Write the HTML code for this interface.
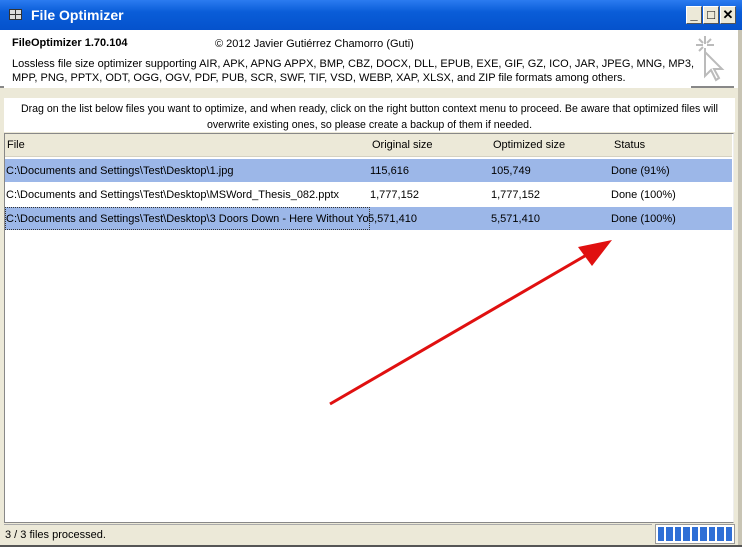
<!DOCTYPE html>
<html><head><style>
*{margin:0;padding:0;box-sizing:border-box}
body{width:742px;height:547px;overflow:hidden;background:#ece9d8;font-family:"Liberation Sans",Arial,sans-serif;font-size:11px;color:#000;position:relative}
.abs{position:absolute}
.title{left:0;top:0;width:742px;height:30px;background:linear-gradient(#2b7bf0,#0a5dd8 40%,#0552cc);}
.btn{top:6px;width:16px;height:18px;background:#ece9d8;border:1px solid #fff;border-right-color:#555;border-bottom-color:#555;font:bold 13px "Liberation Sans",sans-serif;text-align:center;line-height:16px}
.t{white-space:nowrap}
.row{left:5px;width:727px;height:23px;line-height:22px}
</style></head><body>
<div class="abs title"></div>
<div class="abs" style="left:9px;top:9px;width:13px;height:11px;background:#ddd;border:1px solid #333"><div style="position:absolute;left:5px;top:0;width:1px;height:9px;background:#333"></div><div style="position:absolute;left:0;top:4px;width:11px;height:1px;background:#333"></div></div>
<div class="abs t" style="left:31px;top:7px;color:#fff;font:bold 14px 'Liberation Sans',sans-serif">File Optimizer</div>
<div class="abs btn" style="left:686px">_</div>
<div class="abs btn" style="left:703px">□</div>
<div class="abs btn" style="left:720px">✕</div>
<div class="abs" style="left:0;top:30px;width:739px;height:58px;background:#fff"></div>
<div class="abs" style="left:0;top:86px;width:4px;height:2px;background:#888"></div>
<div class="abs" style="left:691px;top:86px;width:43px;height:2px;background:#888"></div>
<div class="abs t" style="left:12px;top:37px;font-weight:bold;font-size:11px">FileOptimizer 1.70.104</div>
<div class="abs t" style="left:215px;top:38px;font-size:11px">© 2012 Javier Gutiérrez Chamorro (Guti)</div>
<div class="abs t" style="left:12px;top:57px;line-height:14px;font-size:11px">Lossless file size optimizer supporting AIR, APK, APNG APPX, BMP, CBZ, DOCX, DLL, EPUB, EXE, GIF, GZ, ICO, JAR, JPEG, MNG, MP3,<br>MPP, PNG, PPTX, ODT, OGG, OGV, PDF, PUB, SCR, SWF, TIF, VSD, WEBP, XAP, XLSX, and ZIP file formats among others.</div>
<svg class="abs" style="left:690px;top:34px" width="40" height="50"><g stroke="#bbb" stroke-width="2" fill="none"><path d="M15 2v8M15 14v6M6 11h7M17 11h7M9 5l4 4M21 5l-4 4M9 17l4-4"/><path d="M15 18v24l6-6 5 10 3-2-5-9h8z" fill="#fff"/></g></svg>
<div class="abs" style="left:4px;top:98px;width:731px;height:34px;background:#fff"></div>
<div class="abs" style="left:4px;top:101px;width:731px;text-align:center;line-height:16px;font-size:10.6px;white-space:nowrap">Drag on the list below files you want to optimize, and when ready, click on the right button context menu to proceed. Be aware that optimized files will<br>overwrite existing ones, so please create a backup of them if needed.</div>
<div class="abs" style="left:4px;top:133px;width:730px;height:390px;background:#fff;border:1px solid #888;border-right-color:#eee"></div>
<div class="abs" style="left:5px;top:134px;width:727px;height:23px;background:#ece9d8;border-bottom:1px solid #d6d2c2"></div>
<div class="abs t" style="left:7px;top:139px">File</div>
<div class="abs t" style="left:372px;top:139px">Original size</div>
<div class="abs t" style="left:493px;top:139px">Optimized size</div>
<div class="abs t" style="left:614px;top:139px">Status</div>
<div class="abs row" style="top:159px;background:#9cb7e8"></div>
<div class="abs row" style="top:207px;background:#9cb7e8"></div>
<div class="abs" style="left:5px;top:207px;width:365px;height:23px;border:1px dotted #333"></div>
<div class="abs t" style="left:6px;top:165px">C:\Documents and Settings\Test\Desktop\1.jpg</div>
<div class="abs t" style="left:6px;top:189px">C:\Documents and Settings\Test\Desktop\MSWord_Thesis_082.pptx</div>
<div class="abs t" style="left:6px;top:213px;width:363px;overflow:hidden">C:\Documents and Settings\Test\Desktop\3 Doors Down -  Here Without You</div>
<div class="abs t" style="left:370px;top:165px">115,616</div><div class="abs t" style="left:491px;top:165px">105,749</div><div class="abs t" style="left:611px;top:165px">Done (91%)</div>
<div class="abs t" style="left:370px;top:189px">1,777,152</div><div class="abs t" style="left:491px;top:189px">1,777,152</div><div class="abs t" style="left:611px;top:189px">Done (100%)</div>
<div class="abs t" style="left:368px;top:213px">5,571,410</div><div class="abs t" style="left:491px;top:213px">5,571,410</div><div class="abs t" style="left:611px;top:213px">Done (100%)</div>
<svg class="abs" style="left:0;top:0" width="742" height="547"><line x1="330" y1="404" x2="590" y2="253" stroke="#e01010" stroke-width="3"/><polygon points="612,240 578,247 592,266" fill="#e01010"/></svg>
<div class="abs" style="left:4px;top:524px;width:648px;height:20px;border-top:1px solid #aaa"></div>
<div class="abs t" style="left:5px;top:529px">3 / 3 files processed.</div>
<div class="abs" style="left:655px;top:524px;width:80px;height:20px;border:1px solid #999;background:#fff;padding:2px;display:flex;gap:2px">
<div style="flex:1;background:#2f6fd6"></div><div style="flex:1;background:#2f6fd6"></div><div style="flex:1;background:#2f6fd6"></div><div style="flex:1;background:#2f6fd6"></div><div style="flex:1;background:#2f6fd6"></div><div style="flex:1;background:#2f6fd6"></div><div style="flex:1;background:#2f6fd6"></div><div style="flex:1;background:#2f6fd6"></div><div style="flex:1;background:#2f6fd6"></div></div>
<div class="abs" style="left:0;top:545px;width:742px;height:2px;background:#555"></div>
<div class="abs" style="left:738px;top:30px;width:4px;height:515px;background:#c8c4b4"></div>
</body></html>
